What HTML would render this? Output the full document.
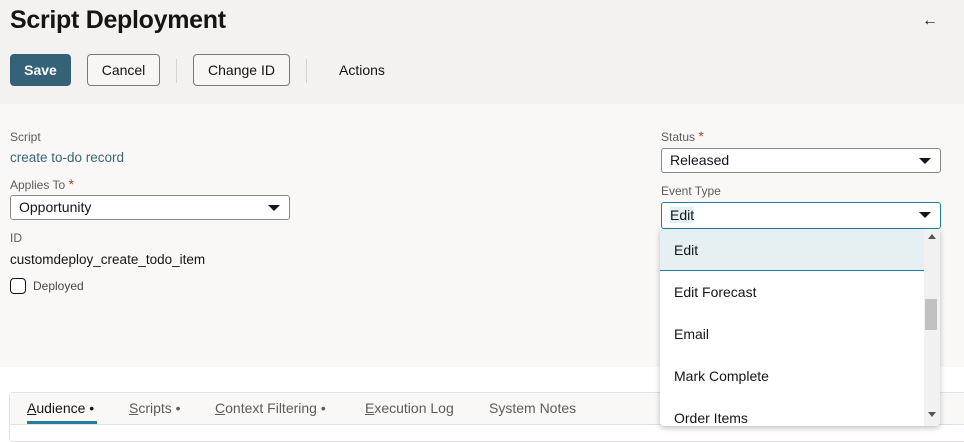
<!DOCTYPE html>
<html><head><style>
*{box-sizing:border-box;margin:0;padding:0}
body{width:964px;height:437px;overflow:hidden;background:#fff;font-family:"Liberation Sans",sans-serif;color:#161513;position:relative}
.abs{position:absolute}
.hdr{left:0;top:0;width:964px;height:104px;background:#f3f2f1}
.form{left:0;top:104px;width:964px;height:263px;background:#f9f8f7}
h1{position:absolute;left:10px;top:6px;font-size:25px;font-weight:bold;letter-spacing:-0.3px}
.btn{position:absolute;top:54px;height:32px;border:1px solid #7b7772;border-radius:4px;font-size:14px;line-height:30px;text-align:center;background:#f7f6f5}
.lbl{position:absolute;font-size:12px;color:#5f5b56}
.val{position:absolute;font-size:13.5px}
.sel{position:absolute;height:25px;border:1px solid #8a8681;border-radius:3px;background:#fff;font-size:14px;line-height:23px;padding-left:8px}
.sel:after{content:"";position:absolute;right:9px;top:9px;border-left:6px solid transparent;border-right:6px solid transparent;border-top:6px solid #161513}
.star{color:#b3411f;font-size:14px}
.item{position:absolute;left:0;width:264px;height:42px;font-size:14px;line-height:42px;padding-left:14px}
.tab{position:absolute;top:400px;font-size:14px;color:#5f5b56}
</style></head><body>
<div class="abs hdr"></div>
<div class="abs form"></div>
<h1>Script Deployment</h1>
<div class="abs" style="left:922px;top:12px;font-size:16px">&larr;</div>
<div class="btn" style="left:10px;width:61px;background:#366278;border-color:#366278;color:#fff;font-weight:bold">Save</div>
<div class="btn" style="left:87px;width:73px">Cancel</div>
<div class="abs" style="left:176px;top:59px;width:1px;height:24px;background:#d6d3cf"></div>
<div class="btn" style="left:193px;width:97px">Change ID</div>
<div class="abs" style="left:306px;top:59px;width:1px;height:24px;background:#d6d3cf"></div>
<div class="abs" style="left:339px;top:62px;font-size:14px">Actions</div>

<div class="lbl" style="left:10px;top:130px">Script</div>
<div class="val" style="left:10px;top:150px;color:#3b6578">create to-do record</div>
<div class="lbl" style="left:10px;top:176px">Applies To <span class="star">*</span></div>
<div class="sel" style="left:10px;top:195px;width:280px">Opportunity</div>
<div class="lbl" style="left:10px;top:231px">ID</div>
<div class="val" style="left:10px;top:252px">customdeploy_create_todo_item</div>
<div class="abs" style="left:10px;top:278px;width:16px;height:16px;border:1.5px solid #161513;border-radius:4px;background:#fff"></div>
<div class="lbl" style="left:33px;top:279px;color:#4a4743">Deployed</div>

<div class="lbl" style="left:661px;top:128px">Status <span class="star">*</span></div>
<div class="sel" style="left:661px;top:148px;width:280px">Released</div>
<div class="lbl" style="left:661px;top:184px">Event Type</div>
<div class="sel" style="left:661px;top:202px;width:280px;height:27px;border:1.5px solid #227e9e;line-height:24px"><span style="background:#e4eff3">Edit</span></div>

<div class="tabsbox abs" style="left:9px;top:392px;width:960px;height:50px;border:1px solid #e4e1dd;border-radius:4px;background:#fff"></div>
<div class="abs" style="left:10px;top:393px;width:954px;height:32px;background:#f9f8f7;border-bottom:1px solid #e4e1dd"></div>
<div class="tab" style="left:27px;color:#161513"><u>A</u>udience •</div>
<div class="abs" style="left:27px;top:421px;width:70px;height:3px;background:#227e9e"></div>
<div class="tab" style="left:129px"><u>S</u>cripts •</div>
<div class="tab" style="left:215px"><u>C</u>ontext Filtering •</div>
<div class="tab" style="left:365px"><u>E</u>xecution Log</div>
<div class="tab" style="left:489px">System Notes</div>

<div class="abs" style="left:660px;top:229px;width:280px;height:197px;background:#fff;border-radius:0 0 4px 4px;box-shadow:0 2px 6px rgba(0,0,0,.25);overflow:hidden">
<div class="item" style="top:0;background:#e6f0f2;border-bottom:1.5px solid #227e9e">Edit</div>
<div class="item" style="top:42px">Edit Forecast</div>
<div class="item" style="top:84px">Email</div>
<div class="item" style="top:126px">Mark Complete</div>
<div class="item" style="top:168px">Order Items</div>
<div class="abs" style="left:264px;top:0;width:16px;height:197px;background:#f1f1f1"></div>
<div class="abs" style="left:268px;top:5px;border-left:4px solid transparent;border-right:4px solid transparent;border-bottom:5px solid #555"></div>
<div class="abs" style="left:265px;top:70px;width:12px;height:31px;background:#c1c1c1"></div>
<div class="abs" style="left:268px;top:183px;border-left:4px solid transparent;border-right:4px solid transparent;border-top:5px solid #555"></div>
</div>
</body></html>
